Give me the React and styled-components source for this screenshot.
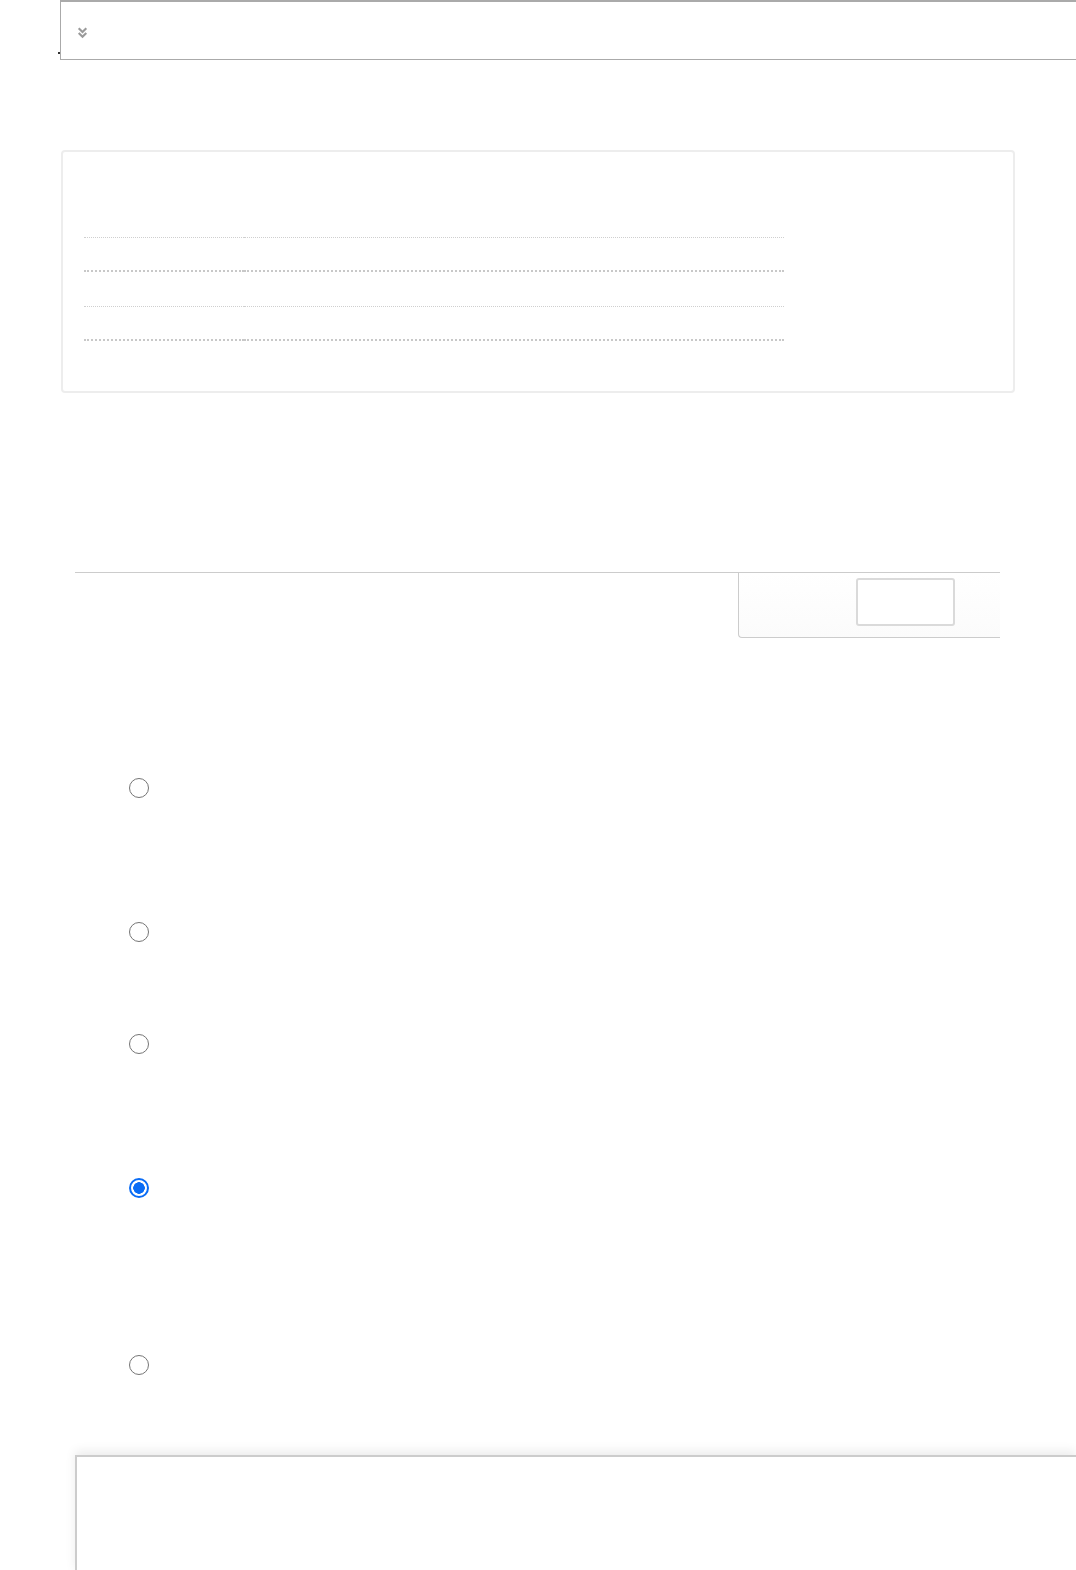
import React, { useState } from 'react';
import styled, { createGlobalStyle } from 'styled-components';

const GlobalStyle = createGlobalStyle`
  html, body {
    margin: 0;
    padding: 0;
    background: #fff;
    overflow-x: hidden;
    font-family: 'Liberation Sans', Arial, sans-serif;
  }
`;

const Page = styled.div`
  display: flex;
  flex-direction: column;
  width: 1076px;
  min-height: 1570px;
  overflow: hidden;
`;

const TopBar = styled.div`
  position: relative;
  display: flex;
  align-items: center;
  box-sizing: border-box;
  height: 60px;
  margin-left: 60px;
  padding: 4px 0 0 15px;
  border: 1px solid #aaa;
  border-top-width: 2px;
  border-right: none;

  &::before {
    content: '';
    position: absolute;
    left: -3px;
    bottom: 5px;
    width: 2px;
    height: 2px;
    background: #333;
  }
`;

const Chevron = styled.svg`
  width: 13px;
  height: 13px;
  color: #9a9a9a;
`;

const Card = styled.div`
  box-sizing: border-box;
  width: 954px;
  height: 243px;
  margin: 90px 0 0 61px;
  padding: 51px 0 0 21px;
  border: 2px solid #ededed;
  border-radius: 4px;
`;

const Table = styled.div`
  display: grid;
  grid-template-columns: 160px 540px;
  width: 700px;
`;

const Cell = styled.div`
  height: 34.5px;
  box-sizing: border-box;
  border-bottom: ${p => (p.$bold ? '2px dotted #c8c8c8' : '1px dotted #cfcfcf')};
`;

const TabStrip = styled.div`
  display: flex;
  justify-content: flex-end;
  width: 925px;
  margin: 179px 0 0 75px;
  border-top: 1px solid #ccc;
`;

const TabPanel = styled.div`
  display: flex;
  justify-content: flex-end;
  box-sizing: border-box;
  width: 262px;
  height: 65px;
  padding: 5px 45px 0 0;
  border-left: 1px solid #ccc;
  border-bottom: 1px solid #ccc;
  border-bottom-left-radius: 4px;
  background: linear-gradient(#fff, #fbfbfb);
`;

const TabButton = styled.button`
  box-sizing: border-box;
  width: 99px;
  height: 48px;
  background: #fff;
  border: 2px solid #dadada;
  border-radius: 3px;
  padding: 0;
`;

const RadioList = styled.div`
  display: flex;
  flex-direction: column;
  margin: 140px 0 0 129px;
`;

const RadioRow = styled.label`
  display: flex;
  align-items: flex-start;
  height: ${p => p.$h}px;
`;

const Radio = styled.input.attrs({ type: 'radio' })`
  appearance: none;
  box-sizing: border-box;
  width: 20px;
  height: 20px;
  margin: 0;
  border: 1.5px solid #757575;
  border-radius: 50%;
  background: #fff;

  &:checked {
    border: 2px solid #0a6cf5;
    background: radial-gradient(circle, #0a6cf5 0 5.5px, #fff 6px);
  }
`;

const BottomBox = styled.div`
  box-sizing: border-box;
  height: 118px;
  margin: 80px 0 0 75px;
  border: 2px solid #ccc;
  border-right: none;
  box-shadow: 0 -4px 10px rgba(0, 0, 0, 0.08);
`;

const rows = [false, true, false, true];
const options = [144, 112, 144, 177, 20];

export default function App() {
  const [selected, setSelected] = useState(3);

  return (
    <Page>
      <GlobalStyle />
      <TopBar>
        <Chevron viewBox="0 0 12 12" fill="none" stroke="currentColor" strokeWidth="2">
          <path d="M2.5 2 6 5.5 9.5 2M2.5 6.5 6 10l3.5-3.5" />
        </Chevron>
      </TopBar>

      <Card>
        <Table>
          {rows.map((bold, i) => (
            <React.Fragment key={i}>
              <Cell $bold={bold} />
              <Cell $bold={bold} />
            </React.Fragment>
          ))}
        </Table>
      </Card>

      <TabStrip>
        <TabPanel>
          <TabButton />
        </TabPanel>
      </TabStrip>

      <RadioList>
        {options.map((h, i) => (
          <RadioRow key={i} $h={h}>
            <Radio name="choice" checked={selected === i} onChange={() => setSelected(i)} />
          </RadioRow>
        ))}
      </RadioList>

      <BottomBox />
    </Page>
  );
}
